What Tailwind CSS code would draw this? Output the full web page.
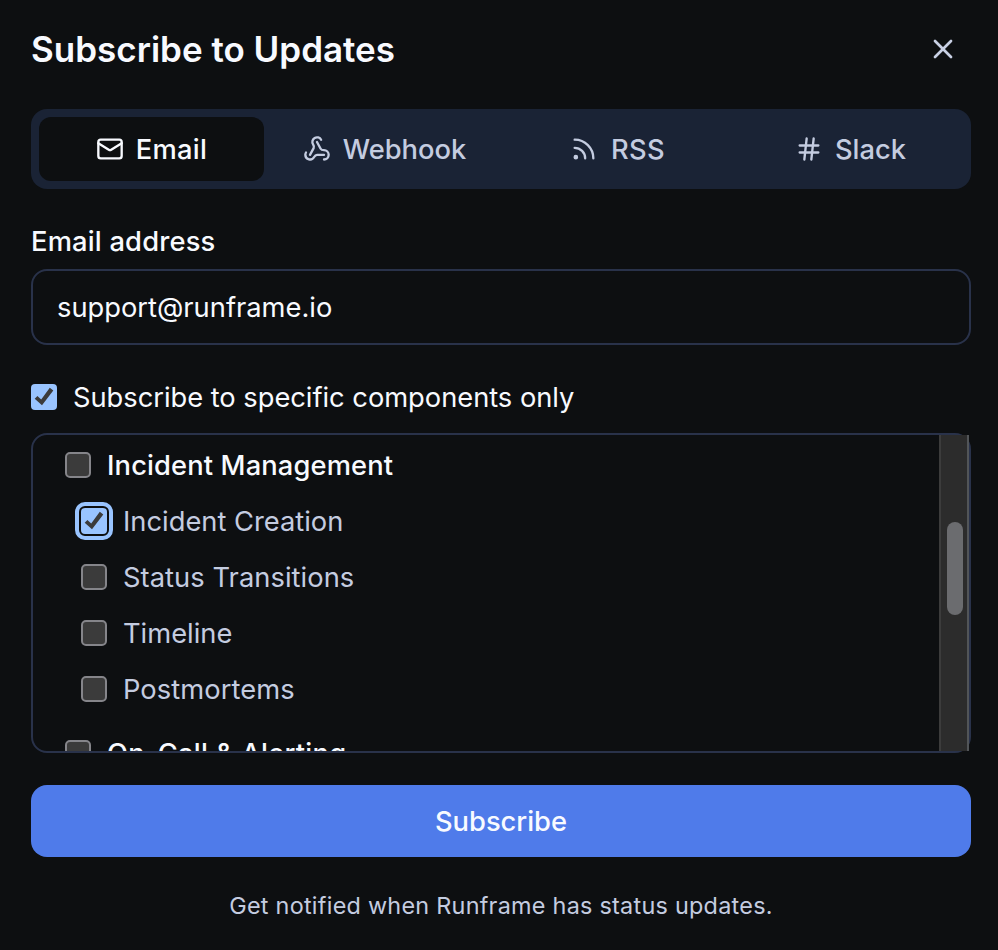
<!DOCTYPE html>
<html lang="en">

<head>
    <meta charset="UTF-8">
    <meta name="viewport" content="width=device-width, initial-scale=1.0">
    <title>Subscribe to Updates</title>
    <script src="https://cdn.jsdelivr.net/npm/@tailwindcss/browser@4"></script>
</head>

<body class="bg-[#0d0f11] font-['Inter',sans-serif] text-[27.3px] leading-10 text-[#f8faff]">
    <div class="h-[950px] flex flex-col pl-[31px] pr-[27px] pt-[25px] overflow-hidden">
        <!-- Header -->
        <div class="flex items-center justify-between h-12 pr-3">
            <h1 class="text-[35px] leading-[48px] font-semibold tracking-normal">Subscribe to Updates</h1>
            <button type="button" aria-label="Close" class="text-[#c8d0e4]">
                <svg class="size-8" viewBox="0 0 24 24" fill="none" stroke="currentColor" stroke-width="2" stroke-linecap="round" stroke-linejoin="round"><path d="M18 6 6 18" /><path d="m6 6 12 12" /></svg>
            </button>
        </div>

        <!-- Tabs -->
        <div class="mt-9 grid grid-cols-4 gap-2 h-20 p-2 rounded-2xl bg-[#1a2335] font-medium text-[#c4cce0]">
            <button type="button" class="flex items-center justify-center gap-3 rounded-xl bg-[#0d0f11] text-[#f8faff]">
                <svg class="size-7" viewBox="0 0 24 24" fill="none" stroke="currentColor" stroke-width="2" stroke-linecap="round" stroke-linejoin="round"><rect width="20" height="16" x="2" y="4" rx="2" /><path d="m22 7-8.97 5.7a1.94 1.94 0 0 1-2.06 0L2 7" /></svg>
                <span class="pt-0.5 tracking-[0.01em]">Email</span>
            </button>
            <button type="button" class="flex items-center justify-center gap-3 rounded-xl">
                <svg class="size-7" viewBox="0 0 24 24" fill="none" stroke="currentColor" stroke-width="2" stroke-linecap="round" stroke-linejoin="round"><path d="M18 16.98h-5.99c-1.1 0-1.95.94-2.48 1.9A4 4 0 0 1 2 17c.01-.7.2-1.4.57-2" /><path d="m6 17 3.13-5.78c.53-.97.1-2.18-.5-3.1a4 4 0 1 1 6.89-4.06" /><path d="m12 6 3.13 5.73C15.66 12.7 16.9 13 18 13a4 4 0 0 1 0 8" /></svg>
                <span class="pt-0.5">Webhook</span>
            </button>
            <button type="button" class="flex items-center justify-center gap-[13px] rounded-xl">
                <svg class="size-7" viewBox="0 0 24 24" fill="none" stroke="currentColor" stroke-width="2" stroke-linecap="round" stroke-linejoin="round"><path d="M4 11a9 9 0 0 1 9 9" /><path d="M4 4a16 16 0 0 1 16 16" /><circle cx="5" cy="19" r="1" /></svg>
                <span class="pt-0.5 tracking-[0.01em]">RSS</span>
            </button>
            <button type="button" class="flex items-center justify-center gap-3 rounded-xl">
                <svg class="size-7" viewBox="0 0 24 24" fill="none" stroke="currentColor" stroke-width="2" stroke-linecap="round" stroke-linejoin="round"><path d="M4 9h16" /><path d="M4 15h16" /><path d="M10 3 8 21" /><path d="m16 3-2 18" /></svg>
                <span class="pt-0.5">Slack</span>
            </button>
        </div>

        <!-- Email field -->
        <label for="email" class="mt-[33px] font-medium tracking-[0.007em]">Email address</label>
        <input id="email" type="text" value="support@runframe.io" class="mt-[7px] h-[76px] shrink-0 px-6 rounded-2xl border-2 border-[#29324a] outline-none">

        <label class="mt-8 flex items-center gap-4 h-10">
            <span class="size-[26px] rounded-[4px] bg-[#99c4ff]">
                <svg class="size-[26px]" viewBox="0 0 26 26" fill="#3b3b3b"><path d="M3.7 14.7 6.4 12 10.2 15.6 18.8 3.8 22.3 6.4 11 21.2Z" /></svg>
            </span>
            <span class="pt-0.5 tracking-[-0.001em]">Subscribe to specific components only</span>
        </label>

        <!-- Component list -->
        <div class="mt-4 flex h-80 shrink-0 rounded-2xl border-2 border-[#29324a]">
            <div class="flex-1 overflow-hidden pl-8 pt-2.5 flex flex-col gap-4 text-[#c4cce0]">
                <label class="flex h-10 shrink-0 items-center gap-4 font-medium text-[#f8faff]">
                    <span class="size-[26px] rounded-[5px] border-2 border-[#85858a] bg-[#3b3b3b]"></span>
                    <span class="pt-0.5 tracking-[0.005em]">Incident Management</span>
                </label>
                <label class="ml-4 flex h-10 shrink-0 items-center gap-4">
                    <span class="size-[26px] rounded-[4px] bg-[#99c4ff] outline-4 outline-offset-2 outline-[#99c4ff]">
                        <svg class="size-[26px]" viewBox="0 0 26 26" fill="#3b3b3b"><path d="M3.7 14.7 6.4 12 10.2 15.6 18.8 3.8 22.3 6.4 11 21.2Z" /></svg>
                    </span>
                    <span class="pt-0.5">Incident Creation</span>
                </label>
                <label class="ml-4 flex h-10 shrink-0 items-center gap-4">
                    <span class="size-[26px] rounded-[5px] border-2 border-[#85858a] bg-[#3b3b3b]"></span>
                    <span class="pt-0.5 tracking-[0.002em]">Status Transitions</span>
                </label>
                <label class="ml-4 flex h-10 shrink-0 items-center gap-4">
                    <span class="size-[26px] rounded-[5px] border-2 border-[#85858a] bg-[#3b3b3b]"></span>
                    <span class="pt-0.5">Timeline</span>
                </label>
                <label class="ml-4 flex h-10 shrink-0 items-center gap-4">
                    <span class="size-[26px] rounded-[5px] border-2 border-[#85858a] bg-[#3b3b3b]"></span>
                    <span class="pt-0.5 tracking-[0.003em]">Postmortems</span>
                </label>
                <label class="mt-2 flex h-10 shrink-0 items-center gap-4 font-medium text-[#f8faff]">
                    <span class="size-[26px] rounded-[5px] border-2 border-[#85858a] bg-[#3b3b3b]"></span>
                    <span class="pt-0.5 tracking-[0.01em]">On-Call &amp; Alerting</span>
                </label>
            </div>
            <!-- Scrollbar -->
            <div class="w-[30px] border-l-2 border-r-2 border-l-[#3c3c3c] border-r-[#525558] bg-[#2c2c2c] pl-1.5 pt-[87px]">
                <div class="h-[93px] w-4 rounded-full bg-[#6b6c6f]"></div>
            </div>
        </div>

        <button type="button" class="mt-8 h-[72px] shrink-0 rounded-2xl bg-[#4f7bea] pt-0.5 font-medium">Subscribe</button>

        <p class="mt-[33px] text-center text-[23.4px] leading-8 tracking-[0.011em] text-[#c4cce0]">Get notified when Runframe has status updates.</p>
    </div>
</body>

</html>
